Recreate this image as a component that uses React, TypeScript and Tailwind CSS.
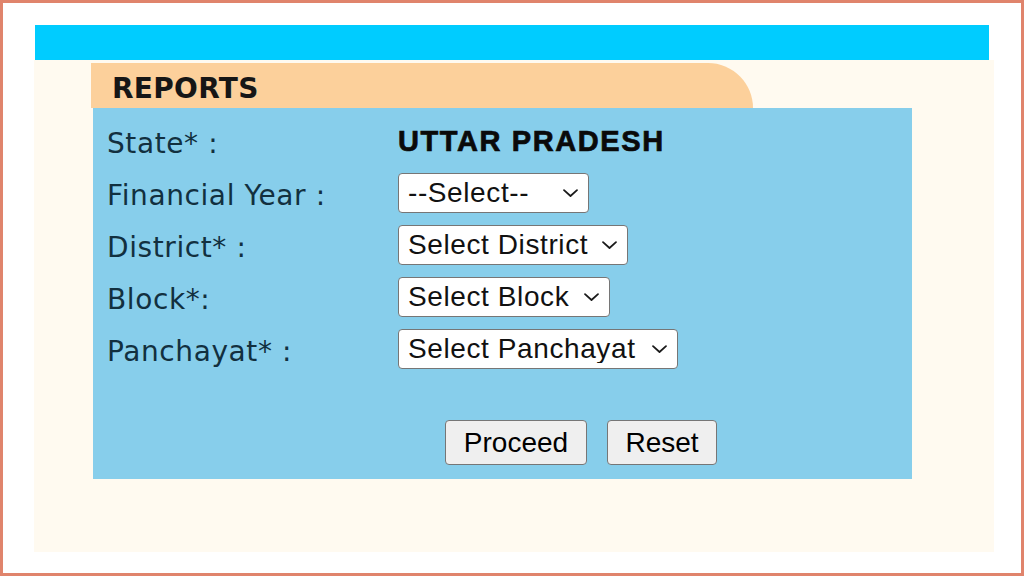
import { useState } from "react";

const labelFont = { fontFamily: '"DejaVu Sans", Verdana, sans-serif' };

function Chevron() {
  return (
    <svg
      width="17"
      height="10"
      viewBox="0 0 17 10"
      fill="none"
      stroke="#1a1a1a"
      strokeWidth="1.8"
      strokeLinecap="round"
      strokeLinejoin="round"
      className="pointer-events-none absolute right-[10px] top-1/2 -translate-y-1/2"
    >
      <path d="M2 2.2 L8.5 8 L15 2.2" />
    </svg>
  );
}

function Dropdown({ width, options }: { width: string; options: string[] }) {
  const [value, setValue] = useState(options[0]);
  return (
    <div className={`relative h-[40px] ${width}`}>
      <select
        value={value}
        onChange={(e) => setValue(e.target.value)}
        className="h-full w-full appearance-none rounded-[4px] border border-[#767676] bg-white pl-[9px] text-[28px] leading-none tracking-[0.6px] text-[#111] outline-none font-['Liberation_Sans',Arial,sans-serif]"
      >
        {options.map((o) => (
          <option key={o}>{o}</option>
        ))}
      </select>
      <Chevron />
    </div>
  );
}

function Row({ label, children }: { label: string; children: React.ReactNode }) {
  return (
    <div className="flex h-[40px] items-center">
      <div
        className="w-[291px] pt-[5px] text-[28px] leading-none tracking-[0.6px] text-[#12303f]"
        style={labelFont}
      >
        {label}
      </div>
      {children}
    </div>
  );
}

export default function App() {
  return (
    <div className="h-[576px] w-[1024px] overflow-hidden border-[3px] border-[#e0846c] bg-white pt-[22px]">
      <div className="ml-[32px] h-[35px] w-[954px] bg-[#00ccff]" />
      <div className="ml-[31px] h-[492px] w-[960px] bg-[#fffaf0] pt-[3px]">
        <div className="ml-[57px] flex h-[45px] w-[662px] items-center rounded-tr-[50px] bg-[#fcd09b] pl-[21px] pt-[7px]">
          <span
            className="text-[28px] font-bold leading-none tracking-[0.3px] text-[#161616]"
            style={labelFont}
          >
            REPORTS
          </span>
        </div>
        <div className="ml-[59px] h-[371px] w-[819px] bg-[#87ceeb] pl-[14px] pt-[13px]">
          <div className="flex flex-col gap-[12px]">
            <Row label="State* :">
              <span className="text-[29px] font-bold leading-none tracking-[1.6px] text-[#0a0a0a] [-webkit-text-stroke:0.7px_#0a0a0a] font-['Liberation_Sans',Arial,sans-serif]">
                UTTAR PRADESH
              </span>
            </Row>
            <Row label="Financial Year :">
              <Dropdown
                width="w-[191px]"
                options={["--Select--", "2023-2024", "2022-2023", "2021-2022"]}
              />
            </Row>
            <Row label="District* :">
              <Dropdown width="w-[230px]" options={["Select District"]} />
            </Row>
            <Row label="Block*:">
              <Dropdown width="w-[212px]" options={["Select Block"]} />
            </Row>
            <Row label="Panchayat* :">
              <Dropdown width="w-[280px]" options={["Select Panchayat"]} />
            </Row>
          </div>
          <div className="ml-[338px] mt-[51px] flex gap-[20px] font-['Liberation_Sans',Arial,sans-serif]">
            <button className="h-[45px] w-[142px] rounded-[4px] border border-[#767676] bg-[#efefef] text-[28px] leading-none text-black">
              Proceed
            </button>
            <button className="h-[45px] w-[110px] rounded-[4px] border border-[#767676] bg-[#efefef] text-[28px] leading-none text-black">
              Reset
            </button>
          </div>
        </div>
      </div>
    </div>
  );
}
